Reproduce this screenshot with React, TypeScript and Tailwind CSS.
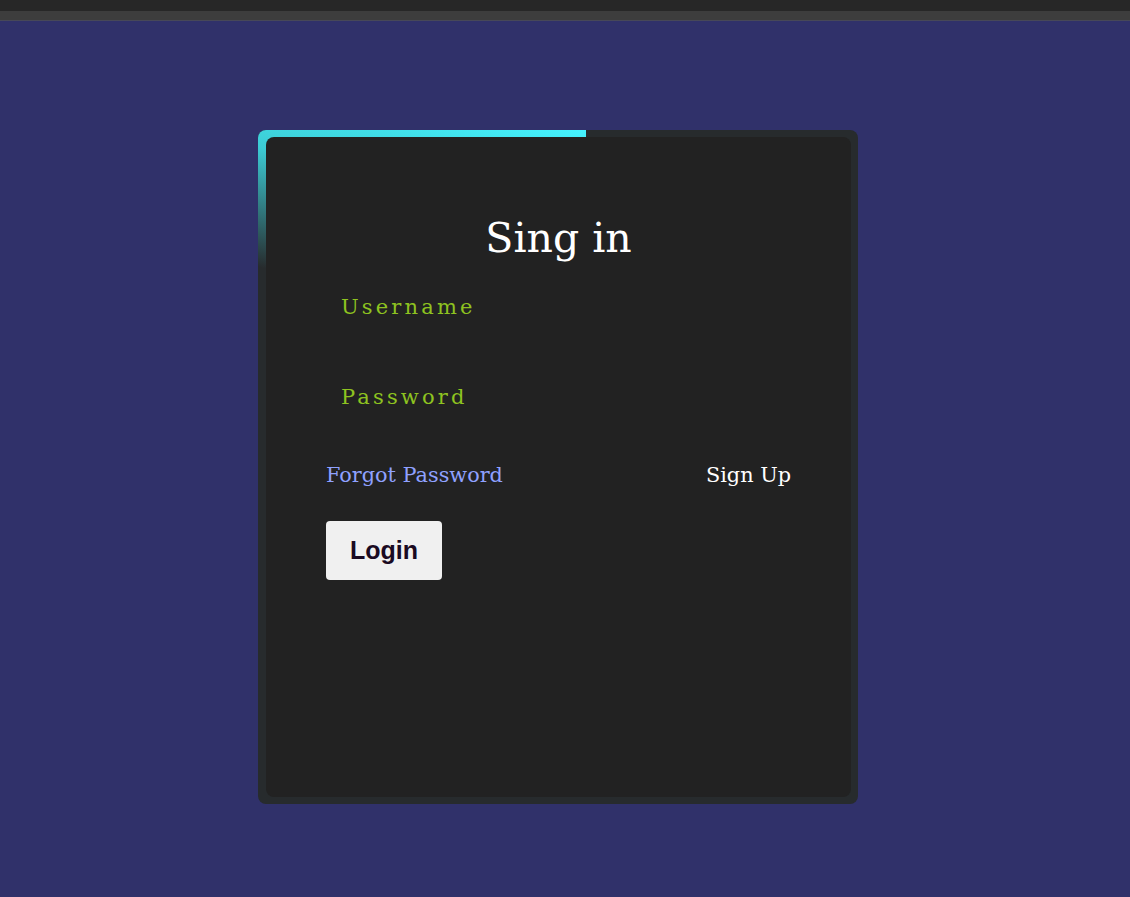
export default function App() {
  const serif = "font-['DejaVu_Serif',serif]";

  return (
    <div className="min-h-[897px] w-full bg-[#30316a]">
      {/* browser-ish top strip */}
      <div className="h-[11px] bg-[#272727]" />
      <div className="h-[9px] bg-[#3d3d3d]" />
      <div className="h-px bg-[#474858]" />

      <div className="pl-[258px] pt-[109px]">
        <div className="relative h-[674px] w-[600px] overflow-hidden rounded-[8px] bg-[#272b2d] pt-[7px] pr-[7px] pb-[7px] pl-[8px]">
          {/* border glow */}
          <div className="absolute left-0 top-0 h-[160px] w-[328px] bg-[linear-gradient(12deg,transparent_10%,#3ccbd4_62%,#45f3ff)]" />

          <div className={`relative flex h-full flex-col rounded-[8px] bg-[#222222] px-[60px] ${serif}`}>
            <h2 className="mt-[77px] text-center text-[41px] leading-[48px] text-white">Sing in</h2>

            <div className="mt-[30px] pl-[15px]">
              <span className="text-[21px] leading-[30px] tracking-[0.15em] text-[#8ec320]">Username</span>
            </div>
            <div className="mt-[60px] pl-[15px]">
              <span className="text-[21px] leading-[30px] tracking-[0.15em] text-[#8ec320]">Password</span>
            </div>

            <div className="mt-[49px] flex items-center justify-between text-[20.8px] leading-[28px]">
              <a className="text-[#8fa1ff]">Forgot Password</a>
              <a className="text-white">Sign Up</a>
            </div>

            <div className="mt-[32px]">
              <button className="h-[59px] w-[116px] rounded-[4px] bg-[#f0f0f0] font-['Liberation_Sans',Arial,sans-serif] text-[25px] font-bold text-[#1a0a22]">
                Login
              </button>
            </div>
          </div>
        </div>
      </div>
    </div>
  );
}
